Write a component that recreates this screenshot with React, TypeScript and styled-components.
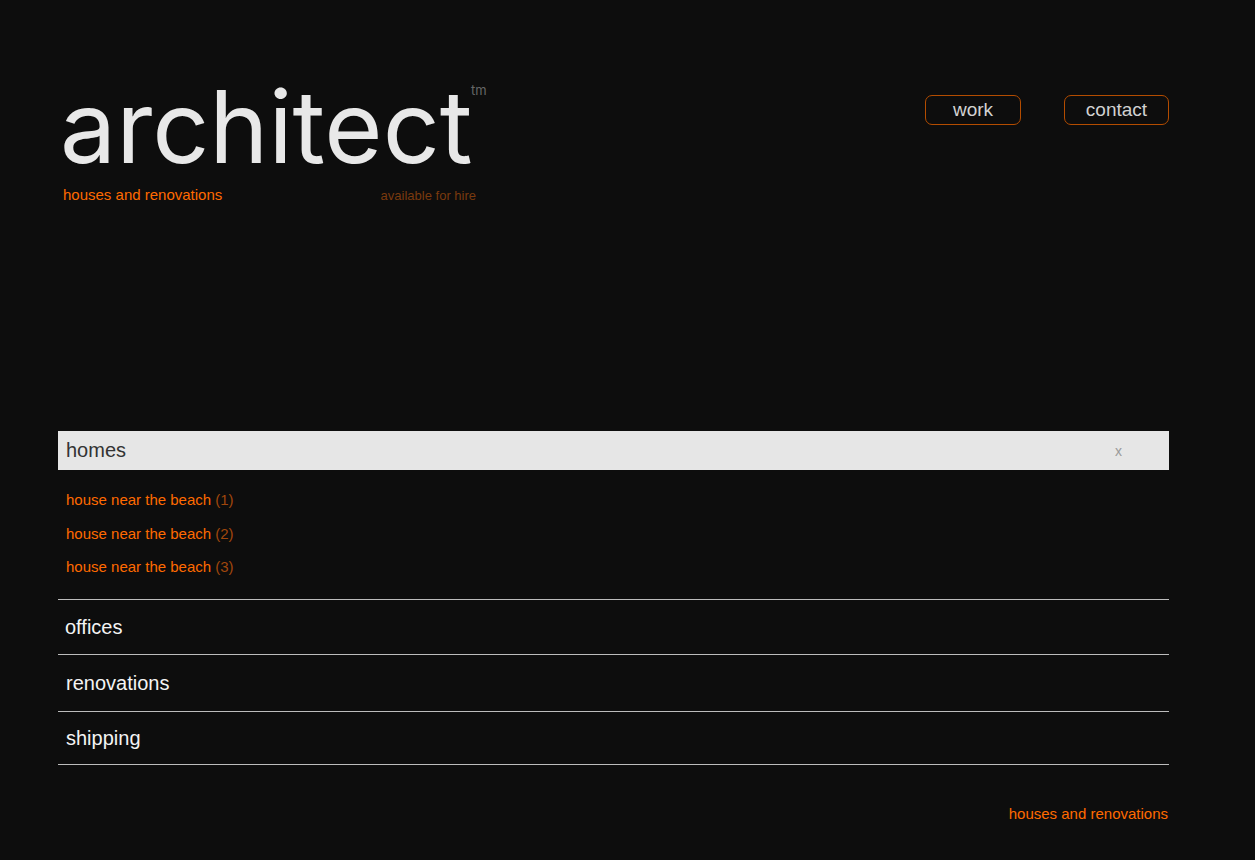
import React from "react";
import styled, { createGlobalStyle } from "styled-components";

const Global = createGlobalStyle`
  html, body { margin: 0; padding: 0; background: #0d0d0d; }
  body { font-family: "Liberation Sans", Arial, sans-serif; }
  * { box-sizing: border-box; }
`;

const Page = styled.div`
  width: 1255px;
  min-height: 860px;
  padding: 77px 86px 0 58px;
  display: flex;
  flex-direction: column;
`;

const Header = styled.header`
  display: flex;
  justify-content: space-between;
  align-items: flex-start;
`;

const Brand = styled.div`
  position: relative;
  width: 420px;
  padding-left: 2px;
`;

const Title = styled.h1`
  display: inline-block;
  margin: 0;
  font-family: Inter, sans-serif;
  font-weight: 400;
  font-size: 100px;
  line-height: 1;
  color: #e8e8e8;
  letter-spacing: 0;
  vertical-align: top;
`;

const Tm = styled.span`
  position: absolute;
  left: 413px;
  top: 6px;
  font-family: Inter, sans-serif;
  font-size: 13px;
  line-height: 1.1;
  color: #666;
`;

const SubLine = styled.div`
  display: flex;
  justify-content: space-between;
  align-items: baseline;
  margin-top: 9px;
  padding-left: 3px;
  width: 416px;
`;

const Tagline = styled.span`
  font-size: 15px;
  color: #ff6a00;
`;

const Hire = styled.span`
  font-size: 13px;
  color: #7a3a0e;
`;

const Nav = styled.nav`
  display: flex;
  gap: 43px;
  margin-top: 18px;
`;

const NavButton = styled.a<{ $w: number }>`
  display: flex;
  align-items: center;
  justify-content: center;
  width: ${(p) => p.$w}px;
  height: 30px;
  border: 1px solid #b34c00;
  border-radius: 7px;
  color: #d2d2d2;
  font-size: 19px;
  text-decoration: none;
`;

const Accordion = styled.section`
  margin-top: 228px;
  width: 1111px;
`;

const OpenHead = styled.div`
  height: 39px;
  background: #e6e6e6;
  display: flex;
  align-items: center;
  justify-content: space-between;
  padding: 0 47px 0 8px;
  font-size: 20px;
  color: #333;
`;

const Close = styled.span`
  font-size: 14px;
  color: #9a9a9a;
`;

const Items = styled.ul`
  list-style: none;
  margin: 0;
  padding: 13px 0 15px 8px;
  border-bottom: 1px solid #bcbcbc;
`;

const Item = styled.li`
  height: 33.5px;
  display: flex;
  align-items: center;
  font-size: 15px;
  color: #ff6a00;
`;

const Count = styled.span`
  color: #a0470c;
  margin-left: 4px;
`;

const Row = styled.div<{ $h: number; $x?: number }>`
  height: ${(p) => p.$h}px;
  display: flex;
  align-items: center;
  padding-left: ${(p) => p.$x ?? 8}px;
  padding-top: 1px;
  border-bottom: 1px solid #bcbcbc;
  font-size: 20px;
  color: #f4f4f4;
`;

const Footer = styled.footer`
  width: 1111px;
  display: flex;
  justify-content: flex-end;
  padding: 40px 1px 0 0;
`;

export default function App() {
  return (
    <>
      <Global />
      <Page>
        <Header>
          <Brand>
            <Title>architect</Title>
            <Tm>tm</Tm>
            <SubLine>
              <Tagline>houses and renovations</Tagline>
              <Hire>available for hire</Hire>
            </SubLine>
          </Brand>
          <Nav>
            <NavButton $w={96} href="#">work</NavButton>
            <NavButton $w={105} href="#">contact</NavButton>
          </Nav>
        </Header>
        <Accordion>
          <OpenHead>
            <span>homes</span>
            <Close>x</Close>
          </OpenHead>
          <Items>
            {[1, 2, 3].map((n) => (
              <Item key={n}>
                house near the beach<Count>({n})</Count>
              </Item>
            ))}
          </Items>
          <Row $h={55} $x={7}>offices</Row>
          <Row $h={57}>renovations</Row>
          <Row $h={53}>shipping</Row>
        </Accordion>
        <Footer>
          <Tagline>houses and renovations</Tagline>
        </Footer>
      </Page>
    </>
  );
}
